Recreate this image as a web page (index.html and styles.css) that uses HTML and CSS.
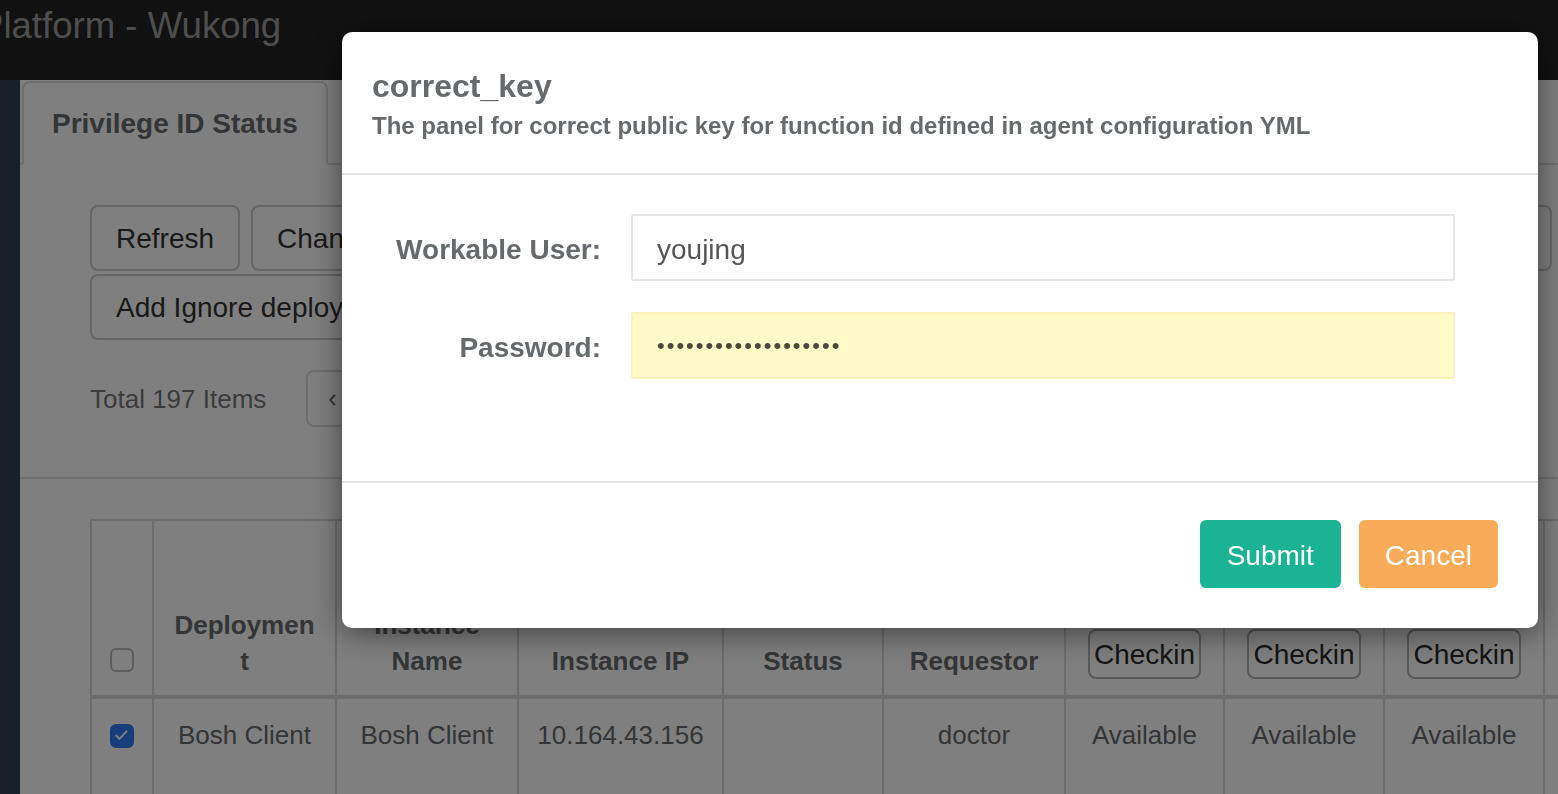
FILE: index.html
```html
<!DOCTYPE html>
<html lang="en">
<head>
<meta charset="utf-8">
<title>Privilege Platform - Wukong</title>
<link rel="stylesheet" href="styles.css">
</head>
<body>
<header class="topbar">
  <span class="brand">Platform - Wukong</span>
</header>
<div class="layout">
  <aside class="sidebar"></aside>
  <main class="main">
    <ul class="tabs">
      <li class="tab">Privilege ID Status</li>
    </ul>
    <section class="toolbar">
      <div class="btn-row">
        <button class="btn">Refresh</button>
        <button class="btn">Change Password</button>
        <button class="btn">Checkout Privilege ID</button>
        <button class="btn">Correct Public Key for Function ID</button>
        <button class="btn">Checkin All</button>
      </div>
      <div class="btn-row">
        <button class="btn">Add Ignore deployment</button>
      </div>
      <div class="pager-row">
        <span class="total">Total 197 Items</span>
        <ul class="pagination">
          <li class="page-link first">&lsaquo;</li>
          <li class="page-link">1</li>
          <li class="page-link">2</li>
          <li class="page-link">3</li>
          <li class="page-link last">&rsaquo;</li>
        </ul>
      </div>
    </section>
    <section class="table-wrap">
      <table class="grid">
        <colgroup>
          <col class="c-check">
          <col class="c-183">
          <col class="c-182">
          <col class="c-205">
          <col class="c-160">
          <col class="c-182">
          <col class="c-159">
          <col class="c-160">
          <col class="c-160">
          <col class="c-160">
        </colgroup>
        <thead>
          <tr>
            <th><div class="th-stack"><span class="check"></span></div></th>
            <th><div class="th-stack"><span>Deployment</span></div></th>
            <th><div class="th-stack"><span>Instance Name</span></div></th>
            <th><div class="th-stack"><span>Instance IP</span></div></th>
            <th><div class="th-stack"><span>Status</span></div></th>
            <th><div class="th-stack"><span>Requestor</span></div></th>
            <th><div class="th-stack"><span>PCF Ops ID</span><button class="checkin">Checkin</button></div></th>
            <th><div class="th-stack"><span>BOSH Ops ID</span><button class="checkin">Checkin</button></div></th>
            <th><div class="th-stack"><span>Cloud Ops ID</span><button class="checkin">Checkin</button></div></th>
            <th><div class="th-stack"><span>Audit ID</span><button class="checkin">Checkin</button></div></th>
          </tr>
        </thead>
        <tbody>
          <tr>
            <td><span class="check is-checked"><svg viewBox="0 0 24 24" width="20" height="20"><path d="M5 11.5l4 4 8.5-9" fill="none" stroke="#fff" stroke-width="2.4" stroke-linecap="round" stroke-linejoin="round"/></svg></span></td>
            <td>Bosh Client</td>
            <td>Bosh Client</td>
            <td>10.164.43.156</td>
            <td></td>
            <td>doctor</td>
            <td>Available</td>
            <td>Available</td>
            <td>Available</td>
            <td>Checked out</td>
          </tr>
          <tr>
            <td><span class="check"></span></td>
            <td>Bosh Director</td>
            <td>director</td>
            <td>10.164.43.157</td>
            <td></td>
            <td>doctor</td>
            <td>Available</td>
            <td>Available</td>
            <td>Available</td>
            <td>Available</td>
          </tr>
        </tbody>
      </table>
    </section>
  </main>
</div>

<div class="backdrop"></div>
<div class="modal" role="dialog" aria-labelledby="modal-title">
  <div class="modal-header">
    <h4 class="modal-title" id="modal-title">correct_key</h4>
    <p class="modal-subtitle">The panel for correct public key for function id defined in agent configuration YML</p>
  </div>
  <div class="modal-body">
    <form class="form-grid">
      <label class="form-label" for="user">Workable User:</label>
      <input class="form-control" id="user" type="text" value="youjing">
      <label class="form-label" for="pwd">Password:</label>
      <input class="form-control autofill" id="pwd" type="password" value="abcdefghijklmnopqrs">
    </form>
  </div>
  <div class="modal-footer">
    <button class="btn-solid btn-primary">Submit</button>
    <button class="btn-solid btn-warning">Cancel</button>
  </div>
</div>
</body>
</html>
```

FILE: styles.css
```css
* { box-sizing: border-box; }

html, body {
  margin: 0;
  height: 100%;
  overflow: hidden;
}

body {
  font-family: "Liberation Sans", Arial, sans-serif;
  color: #676a6c;
  background: #fff;
}

/* top navbar */
.topbar {
  height: 80px;
  background: #222;
  padding-top: 6px;
  overflow: hidden;
  white-space: nowrap;
}

.brand {
  display: block;
  margin-left: -21px;
  font-size: 36.6px;
  line-height: 40px;
  color: #9d9d9d;
}

.layout {
  display: flex;
  min-height: calc(100% - 80px);
}

.sidebar {
  width: 20px;
  flex: none;
  background: #2f4050;
}

.main {
  flex: 1;
  min-width: 0;
  overflow: hidden;
  background: #fff;
}

/* tabs */
.tabs {
  display: flex;
  margin: 0;
  padding: 1px 0 0 2px;
  list-style: none;
  border-bottom: 2px solid #e0e0e0;
}

.tab {
  margin-bottom: -2px;
  padding: 21px 28px 19px;
  border: 2px solid #ddd;
  border-bottom-color: #fff;
  border-radius: 8px 8px 0 0;
  background: #fff;
  font-size: 28px;
  line-height: 40px;
  font-weight: bold;
  color: #676a6c;
}

/* toolbar */
.toolbar {
  padding: 40px 3px 50px 70px;
  border-bottom: 2px solid #e0e0e0;
}

.btn-row {
  display: flex;
  gap: 11px;
  white-space: nowrap;
}

.btn-row + .btn-row { margin-top: 3px; }

.btn {
  flex: none;
  padding: 12px 24px 10px;
  border: 2px solid #ccc;
  border-radius: 8px;
  background: #fff;
  color: #333;
  font: 28px/40px "Liberation Sans", Arial, sans-serif;
}

.pager-row {
  display: flex;
  align-items: center;
  gap: 40px;
  margin-top: 30px;
}

.total {
  font-size: 26px;
  color: #777;
  padding-top: 2px;
}

.pagination {
  display: flex;
  margin: 0;
  padding: 0;
  list-style: none;
}

.page-link {
  padding: 8px 20px;
  margin-left: -2px;
  border: 2px solid #ddd;
  font-size: 26px;
  line-height: 37px;
  color: #676a6c;
}

.page-link.first { margin-left: 0; border-radius: 8px 0 0 8px; }
.page-link.last { border-radius: 0 8px 8px 0; }

/* table */
.table-wrap {
  padding: 40px 0 0 70px;
}

.grid {
  width: 1615px;
  table-layout: fixed;
  border-collapse: separate;
  border-spacing: 0;
  border-top: 2px solid #d8d8d8;
  border-left: 2px solid #d8d8d8;
}

.c-check { width: 62px; }
.c-183 { width: 183px; }
.c-182 { width: 182px; }
.c-205 { width: 205px; }
.c-160 { width: 160px; }
.c-159 { width: 159px; }

.grid th,
.grid td {
  padding: 16px 18px;
  border-right: 2px solid #d8d8d8;
  border-bottom: 2px solid #d8d8d8;
  text-align: center;
  font-size: 26px;
  line-height: 36px;
  overflow-wrap: anywhere;
  color: #676a6c;
}

.grid th {
  border-bottom-width: 4px;
  vertical-align: bottom;
  font-weight: bold;
}

.grid td {
  vertical-align: top;
  padding-top: 18px;
}

.th-stack {
  height: 142px;
  display: flex;
  flex-direction: column;
  justify-content: flex-end;
  align-items: center;
}

.check {
  display: block;
  width: 24px;
  height: 24px;
  margin: 0 auto;
  border: 2px solid #b8b8b8;
  border-radius: 6px;
  background: #fff;
}

.check svg { display: block; }

.th-stack .check { margin-bottom: 7px; }
.grid td .check { margin-top: 7px; }

.check.is-checked {
  background: #2f7bf5;
  border-color: #2f7bf5;
}

.checkin {
  display: block;
  padding: 3px 4px 1px;
  border: 2px solid #b0b0b0;
  border-radius: 8px;
  background: transparent;
  color: #2a2a2a;
  font: 28px/42px "Liberation Sans", Arial, sans-serif;
}

/* modal */
.backdrop {
  position: fixed;
  inset: 0;
  background: rgba(0, 0, 0, 0.5);
}

.modal {
  position: fixed;
  left: 342px;
  top: 32px;
  width: 1196px;
  background: #fff;
  border-radius: 10px;
  box-shadow: 0 5px 30px rgba(0, 0, 0, 0.5);
}

.modal-header {
  padding: 34px 30px 30px;
  border-bottom: 2px solid #e5e5e5;
}

.modal-title {
  margin: 0;
  font-size: 32px;
  line-height: 40px;
  font-weight: bold;
  color: #676a6c;
}

.modal-subtitle {
  margin: 3px 0 0;
  font-size: 24px;
  line-height: 34px;
  font-weight: bold;
  color: #676a6c;
}

.modal-body {
  padding: 39px 30px 102px;
}

.form-grid {
  display: grid;
  grid-template-columns: 229px 824px;
  column-gap: 30px;
  row-gap: 31px;
  align-items: center;
  margin: 0;
}

.form-label {
  padding-top: 4px;
  text-align: right;
  font-size: 28px;
  font-weight: bold;
  color: #676a6c;
}

.form-control {
  width: 100%;
  height: 67px;
  padding: 4px 24px 0;
  border: 2px solid #e5e6e7;
  border-radius: 2px;
  background: #fff;
  color: #555;
  font: 28px "Liberation Sans", Arial, sans-serif;
  outline: none;
}

.form-control.autofill {
  padding-top: 0;
  background: #fffac8;
  border-color: #fcf1bb;
  color: #4a4a3a;
  font-size: 22px;
  letter-spacing: 2px;
}

.modal-footer {
  display: flex;
  justify-content: flex-end;
  gap: 18px;
  padding: 37px 40px 40px;
  border-top: 2px solid #e5e5e5;
}

.btn-solid {
  height: 68px;
  padding: 4px 27px 0;
  border: none;
  border-radius: 6px;
  color: #fff;
  font: 28px "Liberation Sans", Arial, sans-serif;
}

.btn-primary { background: #1ab394; }
.btn-warning { background: #f8ac59; padding-left: 26px; padding-right: 26px; }
```
